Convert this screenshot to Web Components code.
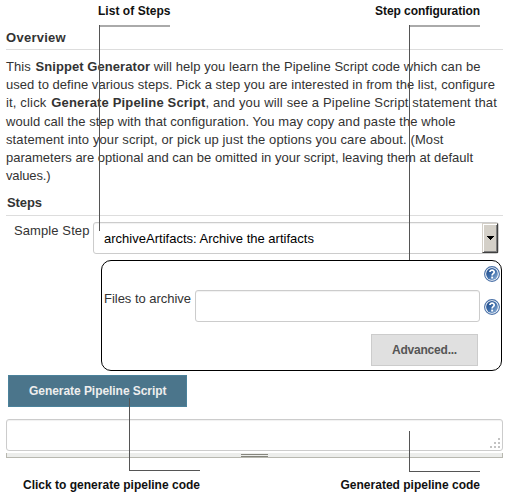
<!DOCTYPE html>
<html lang="en">
<head>
<meta charset="utf-8">
<title>Snippet Generator</title>
<style>
body{margin:0;background:#fff;color:#333;font:13px/18px "Liberation Sans",Arial,sans-serif;overflow:hidden}
</style>
</head>
<body>
<snippet-page></snippet-page>
<script>
const define=(name,html,ready)=>customElements.define(name,class extends HTMLElement{
  connectedCallback(){
    if(this.shadowRoot)return;
    const t=document.createElement('template');
    t.innerHTML=html;
    this.attachShadow({mode:'open'}).append(t.content.cloneNode(true));
    if(ready)ready(this);
  }
});

// One line of text whose tracking is set so that it fills the width given in "w".
define('text-line','<style>:host{display:block;white-space:nowrap;width:max-content}</style><slot></slot>',el=>{
  const w=parseFloat(el.getAttribute('w'));
  const natural=el.getBoundingClientRect().width;
  el.style.letterSpacing=((w-natural)/el.textContent.length)+'px';
});

define('section-title',`<style>
:host{display:block;box-sizing:border-box;height:22px;padding-top:1px;border-bottom:1px solid #ddd;font-weight:bold;color:#333}
</style><slot></slot>`);

define('text-box',`<style>
:host{display:block;box-sizing:border-box;height:32px;border:1px solid #ccc;border-radius:3px;background:#fff;box-shadow:inset 0 1px 1px rgba(0,0,0,.06)}
</style><slot></slot>`);

define('step-select',`<style>
:host{display:flex;box-sizing:border-box;width:406px;height:32px;border:1px solid #ccc;border-radius:3px;background:#fff;color:#000;justify-content:space-between;box-shadow:inset 0 1px 1px rgba(0,0,0,.06)}
.value{padding:7px 0 0 10px}
.arrow{box-sizing:border-box;width:16px;height:30px;background:#d4d0c8;border:1px solid;border-color:#d4d0c8 #404040 #404040 #d4d0c8;box-shadow:inset 1px 1px #fff,inset -1px -1px #808080;display:flex;align-items:center;justify-content:center}
</style><div class="value"><slot></slot></div><div class="arrow"><svg width="7" height="4" shape-rendering="crispEdges"><path d="M0 0h7v1h-1v1h-1v1h-1v1h-1v-1h-1v-1h-1v-1h-1z"/></svg></div>`);

define('help-icon',`<style>:host{display:block;width:16px;height:16px}svg{display:block}</style>
<svg width="16" height="16" viewBox="0 0 16 16"><defs><linearGradient id="g" x2="1" y2="1"><stop offset=".1" stop-color="#244f8d"/><stop offset=".5" stop-color="#3d6daa"/><stop offset="1" stop-color="#9ab9dc"/></linearGradient></defs>
<circle cx="8" cy="8" r="7.4" fill="#fff" stroke="#4a71a8" stroke-width="1.1"/><circle cx="8" cy="8" r="5.9" fill="url(#g)"/>
<path d="M5.9 6.1C5.9 3.4 10.2 3.5 10.2 6C10.2 7.7 8.1 7.7 8.1 9.5" fill="none" stroke="#fff" stroke-width="1.7"/><path d="M7.2 10.6h1.9v1.9h-1.9z" fill="#fff"/></svg>`);

define('push-button',`<style>
:host{display:block;box-sizing:border-box;height:32px;border:1px solid #ccc;background:#e0e0e0;color:#555;font-weight:bold;font-size:12px;padding:6px 0 0 20px}
:host([primary]){background:#4b758b;border-color:#4b829b;color:#eee}
</style><slot></slot>`);

define('step-config',`<style>
:host{display:block;box-sizing:border-box;width:401px;height:111px;border:1px solid #000;border-radius:10px;margin:6px 0 0 101px;padding:5px 1px 0 2px}
.top,.bottom{display:flex;justify-content:flex-end}
.field{display:flex;margin-top:8px}
.label{width:91px;flex:none}
text-box{width:285px;flex:none}
.field help-icon{margin:9px 0 0 4px}
.bottom{margin-top:12px;padding-right:22px}
push-button{width:107px}
</style>
<div class="top"><help-icon></help-icon></div>
<div class="field"><div class="label"><text-line w="87">Files to archive</text-line></div><text-box></text-box><help-icon></help-icon></div>
<div class="bottom"><push-button><text-line w="65">Advanced...</text-line></push-button></div>`);

define('script-output',`<style>
:host{display:block;margin:12px 6px 0}
text-box{display:flex;justify-content:flex-end;align-items:flex-end}
svg{display:block}
.bar{box-sizing:border-box;height:5px;margin-top:2px;background:#ecedeb;border:solid #b8b8b0;border-width:0 1px 1px;display:flex;justify-content:center}
.grip{box-sizing:border-box;width:27px;height:3px;margin-top:1px;border:solid #85857d;border-width:1px 0}
</style>
<text-box><svg width="13" height="13" fill="#c3c3c3" shape-rendering="crispEdges"><path d="M9 1h2v2h-2zM5 5h2v2h-2zM9 5h2v2h-2zM1 9h2v2h-2zM5 9h2v2h-2zM9 9h2v2h-2z"/></svg></text-box>
<div class="bar"><div class="grip"></div></div>`);

// Leader line laid over the page, from a caption to the control it names.
define('leader-line',`<style>
:host{position:absolute;box-sizing:border-box;width:71px;border-left:1px solid #555}
.h{height:2px;background:#aaa}
:host([up]){border-bottom:1px solid #555}
:host([up]) .h{display:none}
</style><div class="h"></div>`);

define('snippet-page',`<style>
:host{display:block;position:relative;width:509px;height:494px;overflow:hidden}
.captions{display:flex;justify-content:space-between;font-size:12px;font-weight:bold;color:#111}
.head{height:28px;padding:2px 29px 0 98px;box-sizing:border-box}
.foot{padding:18px 29px 0 23px}
section-title{margin:0 6px}
.intro{margin:8px 0 0 6px;line-height:18.2px}
.steps{margin-top:9px;padding:0 0 0 1px}
b{color:#333;margin-left:1px}
.row{display:flex;margin-top:6px}
.label{width:79px;padding-left:14px;flex:none}
.action{margin:4px 0 0 8px;width:179px}
</style>
<div class="captions head"><text-line w="72.5">List of Steps</text-line><text-line w="105">Step configuration</text-line></div>
<section-title><text-line w="60">Overview</text-line></section-title>
<div class="intro">
<text-line w="474.5">This <b>Snippet Generator</b> will help you learn the Pipeline Script code which can be</text-line>
<text-line w="489">used to define various steps. Pick a step you are interested in from the list, configure</text-line>
<text-line w="491">it, click <b>Generate Pipeline Script</b>, and you will see a Pipeline Script statement that</text-line>
<text-line w="449.5">would call the step with that configuration. You may copy and paste the whole</text-line>
<text-line w="437.5">statement into your script, or pick up just the options you care about. (Most</text-line>
<text-line w="467">parameters are optional and can be omitted in your script, leaving them at default</text-line>
<text-line w="44.5">values.)</text-line>
</div>
<section-title class="steps"><text-line w="35">Steps</text-line></section-title>
<div class="row"><div class="label"><text-line w="75.5">Sample Step</text-line></div><step-select><text-line w="210">archiveArtifacts: Archive the artifacts</text-line></step-select></div>
<step-config></step-config>
<push-button primary class="action"><text-line w="137.5">Generate Pipeline Script</text-line></push-button>
<script-output></script-output>
<div class="captions foot"><text-line w="177">Click to generate pipeline code</text-line><text-line w="139.5">Generated pipeline code</text-line></div>
<leader-line style="left:99px;top:25px;height:206px"></leader-line>
<leader-line style="left:409px;top:25px;height:235px"></leader-line>
<leader-line up style="left:129px;top:398px;height:73px"></leader-line>
<leader-line up style="left:409px;top:431px;height:41px"></leader-line>`);
</script>
</body>
</html>
